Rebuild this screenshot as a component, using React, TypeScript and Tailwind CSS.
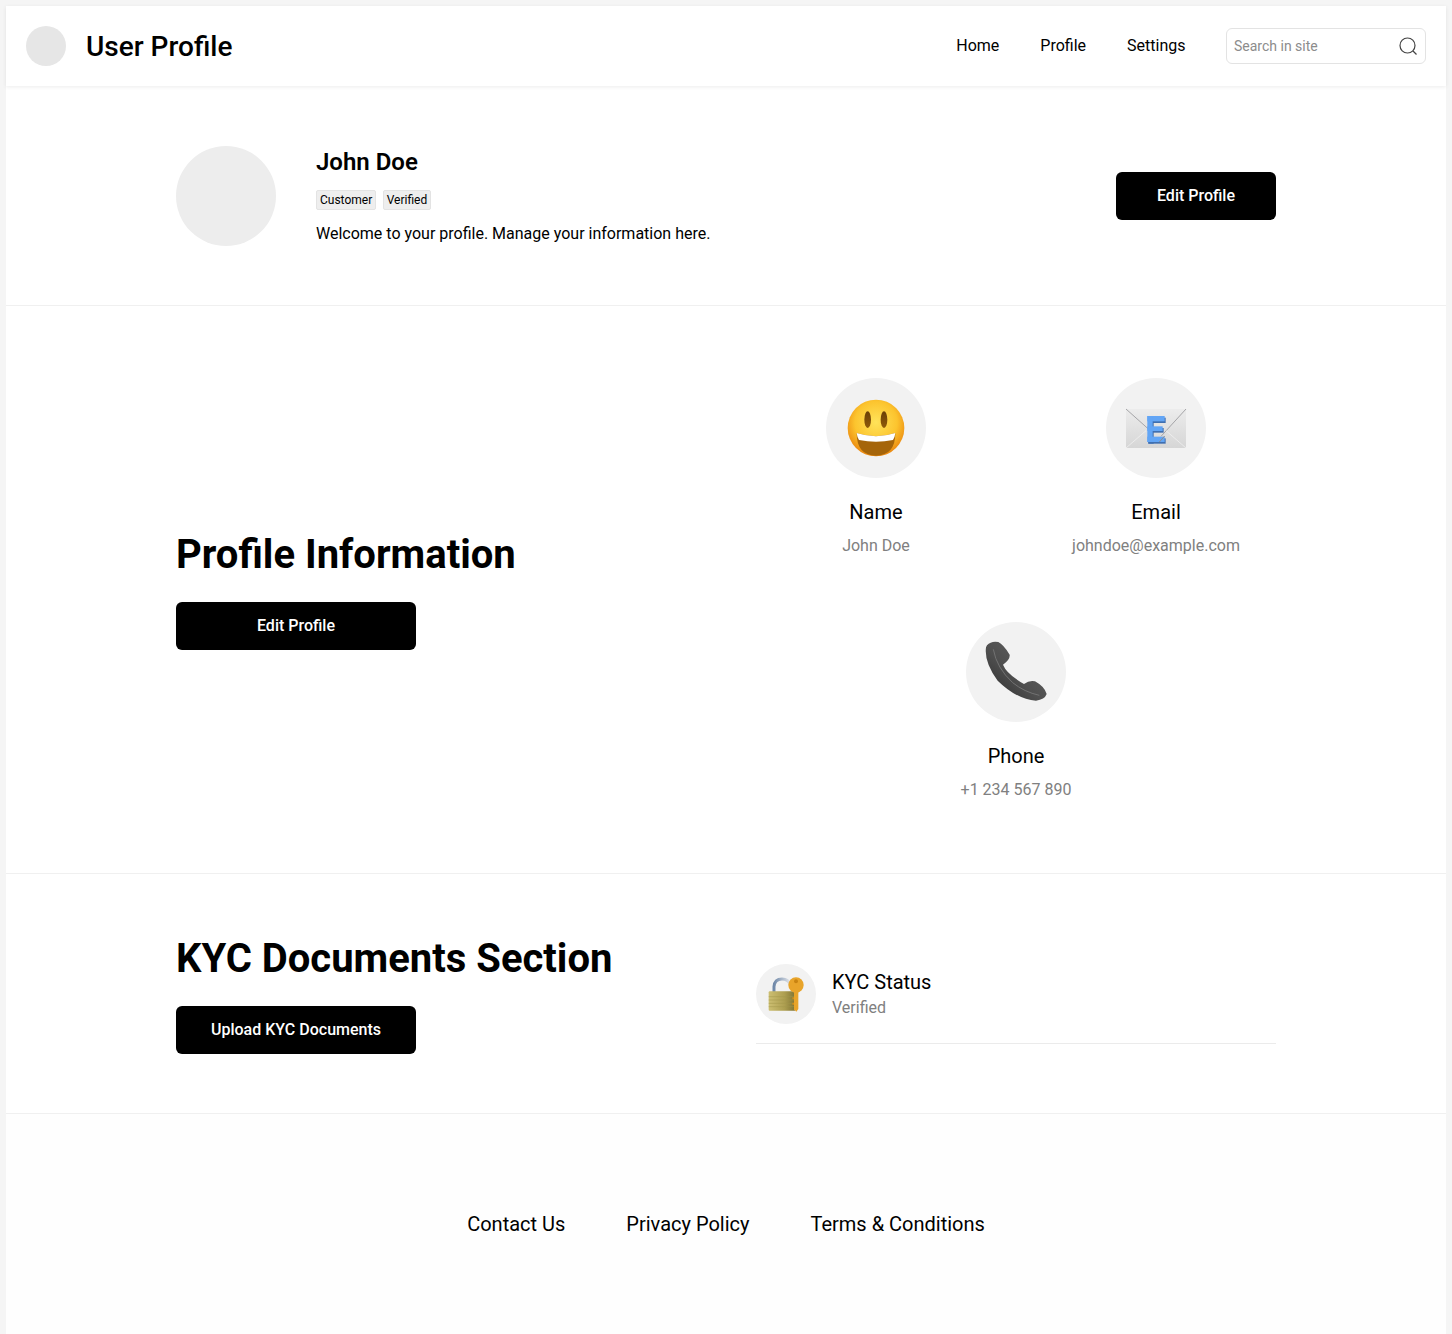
import React from "react";

function Smile() {
  return (
    <svg width="60" height="60" viewBox="90 90 180 180" className="overflow-visible">
      <defs>
        <radialGradient id="sm" cx="50%" cy="40%" r="60%">
          <stop offset="0%" stopColor="#ffe35a" />
          <stop offset="62%" stopColor="#fcc42e" />
          <stop offset="100%" stopColor="#ea860e" />
        </radialGradient>
        <linearGradient id="eye" x1="0" y1="0" x2="0" y2="1">
          <stop offset="0%" stopColor="#6b3f06" />
          <stop offset="100%" stopColor="#8f5a0a" />
        </linearGradient>
      </defs>
      <circle cx="180" cy="180" r="85" fill="url(#sm)" />
      <ellipse cx="155" cy="155" rx="10" ry="25" fill="url(#eye)" />
      <ellipse cx="204" cy="155" rx="10" ry="25" fill="url(#eye)" />
      <path d="M122 195 Q180 214 238 195 Q238 262 180 263 Q122 262 122 195Z" fill="#a5650a" />
      <path d="M122 195 Q180 214 238 195 Q237 206 231 216 Q180 226 129 216 Q123 206 122 195Z" fill="#ffffff" />
    </svg>
  );
}

function Mail() {
  return (
    <svg width="60" height="60" viewBox="90 90 180 180" className="overflow-visible">
      <defs>
        <linearGradient id="en" x1="0" y1="0" x2="0" y2="1">
          <stop offset="0%" stopColor="#ececec" />
          <stop offset="100%" stopColor="#d6d6d6" />
        </linearGradient>
      </defs>
      <rect x="90" y="123" width="180" height="117" rx="2" fill="url(#en)" />
      <path d="M90 123 L165 190 M270 123 L195 205" stroke="#a5a5a8" strokeWidth="3" fill="none" />
      <path d="M90 240 L150 188 M270 240 L210 188" stroke="#f4f4f4" strokeWidth="2" fill="none" />
      <g fill="#3f6fb0" transform="translate(3 5)">
        <rect x="154" y="144" width="52" height="16" />
        <rect x="154" y="144" width="16" height="78" />
        <rect x="154" y="175" width="46" height="14" />
        <rect x="154" y="206" width="52" height="16" />
      </g>
      <g fill="#62a5f5">
        <rect x="154" y="144" width="52" height="16" />
        <rect x="154" y="144" width="16" height="78" />
        <rect x="154" y="175" width="46" height="14" />
        <rect x="154" y="206" width="52" height="16" />
      </g>
      <path d="M190 222 L206 204" stroke="#8d8d90" strokeWidth="3" fill="none" />
    </svg>
  );
}

function Phone() {
  return (
    <svg width="60" height="60" viewBox="90 90 180 180" className="overflow-visible">
      <defs>
        <linearGradient id="ph" x1="1" y1="0" x2="0" y2="1">
          <stop offset="0%" stopColor="#666666" />
          <stop offset="55%" stopColor="#4f4f4f" />
          <stop offset="100%" stopColor="#2a2a2a" />
        </linearGradient>
      </defs>
      <path
        d="M93 100 Q105 86 127 90 Q142 97 161 128 Q163 142 141 158 Q152 186 204 216 Q220 204 237 208 Q266 224 272 246 Q266 263 240 266 Q182 262 125 206 Q84 150 90 106 Z"
        fill="url(#ph)"
      />
      <path d="M112 112 Q122 168 170 212 Q205 240 250 250" stroke="#727272" strokeWidth="3" fill="none" />
    </svg>
  );
}

function Lock() {
  return (
    <svg width="60" height="60" viewBox="30 30 180 180" className="overflow-visible">
      <defs>
        <linearGradient id="lk" x1="0" y1="0" x2="1" y2="0">
          <stop offset="0%" stopColor="#cdbf72" />
          <stop offset="60%" stopColor="#ad9e50" />
          <stop offset="100%" stopColor="#7f7333" />
        </linearGradient>
        <linearGradient id="sh" x1="0" y1="0" x2="1" y2="0">
          <stop offset="0%" stopColor="#6f88a8" />
          <stop offset="100%" stopColor="#e2e5ea" />
        </linearGradient>
      </defs>
      <path d="M84 116 L84 98 Q86 75 108 75 Q128 75 132 92" stroke="url(#sh)" strokeWidth="9" fill="none" />
      <rect x="68" y="112" width="80" height="58" rx="3" fill="url(#lk)" />
      <path d="M68 128 H148 M68 138 H148 M68 148 H148 M68 158 H148" stroke="#a3964a" strokeWidth="1.5" />
      <circle cx="150" cy="93" r="23" fill="#e8a42a" />
      <circle cx="150" cy="82" r="6" fill="#c98412" />
      <path d="M144 112 H157 V165 L151 173 L144 166 Z" fill="#e8a42a" />
      <path d="M144 130 H139 V136 H144 Z M144 146 H139 V152 H144 Z" fill="#d29018" />
    </svg>
  );
}

function Info({ icon, label, value }: { icon: React.ReactNode; label: string; value: string }) {
  return (
    <div className="flex w-[280px] flex-col items-center">
      <div className="flex h-[100px] w-[100px] items-center justify-center rounded-full bg-[#f2f2f2]">{icon}</div>
      <div className="mt-[20px] text-[20px] leading-[28px] text-black">{label}</div>
      <div className="mt-[8px] text-[16px] leading-[24px] text-[#808080]">{value}</div>
    </div>
  );
}

export default function App() {
  return (
    <div className="min-h-[1334px] bg-[#f5f5f5] px-[6px] pt-[6px] font-['Roboto',sans-serif] text-black">
      <div className="h-[1328px] bg-white">
        <header className="relative flex h-[80px] items-center justify-between bg-white px-[20px] shadow-[0_1px_4px_rgba(0,0,0,0.08)]">
          <div className="flex items-center gap-[20px]">
            <div className="h-[40px] w-[40px] rounded-full bg-[#e6e6e6]" />
            <div className="h-[40px] text-[28px] font-medium leading-[42px]">User Profile</div>
          </div>
          <div className="flex items-center">
            <nav className="flex items-center gap-[41px] text-[16px] leading-[24px]">
              <span>Home</span>
              <span>Profile</span>
              <span>Settings</span>
            </nav>
            <div className="ml-[40.5px] flex h-[36px] w-[200px] items-center rounded-[6px] border border-[#e3e3e3] bg-white pl-[7px] pr-[7px]">
              <input
                placeholder="Search in site"
                className="min-w-0 flex-1 bg-transparent text-[14px] outline-none placeholder:text-[#8c8c8c]"
              />
              <svg width="20" height="20" viewBox="0 0 20 20" fill="none" stroke="#444444" strokeWidth="1.2">
                <circle cx="9.5" cy="9.5" r="7.5" />
                <path d="M15 15 L18.5 18.5" />
              </svg>
            </div>
          </div>
        </header>

        <section className="flex h-[220px] items-center justify-between border-b border-[#f0f0f0] px-[170px]">
          <div className="flex items-center gap-[40px]">
            <div className="h-[100px] w-[100px] rounded-full bg-[#ededed]" />
            <div className="flex flex-col">
              <div className="text-[24px] font-semibold leading-[32px]">John Doe</div>
              <div className="mt-[12px] flex gap-[6.5px]">
                <span className="flex h-[20px] items-center rounded-[2px] border border-[#e3e3e3] bg-[#eeeeee] px-[3px] text-[12px]">Customer</span>
                <span className="flex h-[20px] items-center rounded-[2px] border border-[#e3e3e3] bg-[#eeeeee] px-[3px] text-[12px]">Verified</span>
              </div>
              <div className="mt-[12px] text-[16px] leading-[24px]">Welcome to your profile. Manage your information here.</div>
            </div>
          </div>
          <button className="h-[48px] w-[160px] rounded-[6px] bg-black text-[16px] font-medium text-white">Edit Profile</button>
        </section>

        <section className="flex h-[568px] items-center justify-between border-b border-[#f0f0f0] px-[170px]">
          <div className="flex w-[520px] flex-col items-start gap-[24px]">
            <h1 className="h-[48px] text-[40px] font-bold leading-[50px]">Profile Information</h1>
            <button className="h-[48px] w-[240px] rounded-[6px] bg-black text-[16px] font-medium text-white">Edit Profile</button>
          </div>
          <div className="mx-[-20px] flex w-[560px] flex-wrap justify-center gap-y-[64px]">
            <Info icon={<Smile />} label="Name" value="John Doe" />
            <Info icon={<Mail />} label="Email" value="johndoe@example.com" />
            <Info icon={<Phone />} label="Phone" value="+1 234 567 890" />
          </div>
        </section>

        <section className="flex h-[240px] items-center justify-between border-b border-[#f0f0f0] px-[170px]">
          <div className="flex w-[520px] flex-col items-start gap-[24px]">
            <h2 className="h-[48px] text-[40px] font-bold leading-[50px]">KYC Documents Section</h2>
            <button className="h-[48px] w-[240px] rounded-[6px] bg-black text-[16px] font-medium text-white">Upload KYC Documents</button>
          </div>
          <div className="mt-[20px] flex h-[80px] w-[520px] items-start gap-[16px] border-b border-[#ebebeb]">
            <div className="flex h-[60px] w-[60px] items-center justify-center rounded-full bg-[#f2f2f2]"><Lock /></div>
            <div className="flex flex-col pt-[4px]">
              <div className="text-[20px] leading-[28px]">KYC Status</div>
              <div className="text-[16px] leading-[24px] text-[#808080]">Verified</div>
            </div>
          </div>
        </section>

        <footer className="flex h-[220px] items-center justify-center gap-[61px] bg-[#fefefe] text-[20px] leading-[28px]">
          <span>Contact Us</span>
          <span>Privacy Policy</span>
          <span>Terms &amp; Conditions</span>
        </footer>
      </div>
    </div>
  );
}
